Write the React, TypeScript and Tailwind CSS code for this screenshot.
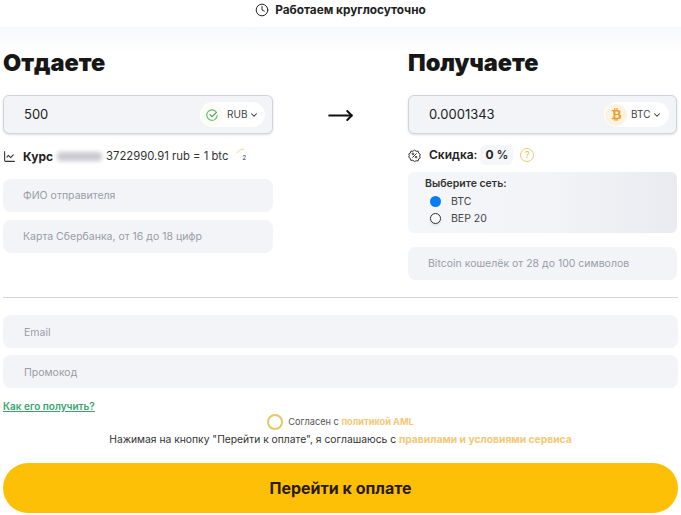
import { ChevronDown, Clock, LineChart, MoveRight } from "lucide-react";
import { FaBtc } from "react-icons/fa";

const sans = "font-['Inter','Liberation_Sans',sans-serif]";
const inputBox = "flex h-[33px] items-center rounded-lg bg-[#f3f4f8] pl-5 pt-[1px] text-[10.5px] text-[#9a9da6]";

function Coin({ code, children, tint }: { code: string; children: React.ReactNode; tint: string }) {
  return (
    <div className="flex h-[25px] w-[65px] items-center rounded-full bg-white pl-px">
      <span className={`flex h-[22px] w-[22px] items-center justify-center rounded-full ${tint}`}>{children}</span>
      <span className="ml-[4px] text-[10px] text-[#444]">{code}</span>
      <ChevronDown size={10} strokeWidth={2.5} className="ml-[2px] text-[#333]" />
    </div>
  );
}

function AmountBox({ value, children }: { value: string; children: React.ReactNode }) {
  return (
    <div className="flex h-[39px] items-center justify-between rounded-md border border-[#cfd3dd] bg-[#f3f4f8] pl-5 pr-[7px] shadow-sm">
      <span className="pt-px text-[13px] text-[#222]">{value}</span>
      {children}
    </div>
  );
}

export default function App() {
  return (
    <div className={`h-[515px] w-[681px] overflow-hidden bg-white ${sans}`}>
      <header className="flex h-[27px] items-start justify-center gap-[6px] pt-[2px] text-[11.8px] font-bold text-[#222]">
        <Clock size={14} strokeWidth={1.7} className="mt-px" />
        <span>Работаем круглосуточно</span>
      </header>

      <div className="bg-[linear-gradient(#f7f8fa,#ffffff_26px)] px-[3px] pt-[21px]">
        <div className="flex justify-between pr-px">
          <div className="w-[270px]">
            <h2 className="text-[23.5px] font-black leading-[30px] text-[#171717]">Отдаете</h2>
            <div className="mt-[17px]">
              <AmountBox value="500">
                <Coin code="RUB" tint="bg-[#fbfdf4]">
                  <svg viewBox="0 0 24 24" width="14" height="14" fill="none" strokeWidth="2">
                    <path d="M20 8a9 9 0 1 0 1 4" stroke="#6fb58a" />
                    <path d="M8 11l4 4 8-8" stroke="#4aa35c" />
                  </svg>
                </Coin>
              </AmountBox>
            </div>
            <div className="mt-[14px] flex h-[17px] items-center text-[11.3px]">
              <LineChart size={13} strokeWidth={2} className="text-[#333]" />
              <b className="ml-[7px] text-[12px] font-bold text-[#222]">Курс</b>
              <span className="ml-[4px] h-[9px] w-[45px] rounded-sm bg-[#c9c9cf] blur-[2px]" />
              <span className="ml-[4px] text-[#333]">3722990.91 rub = 1 btc</span>
              <span className="relative ml-[8px] h-[14px] w-[12px]">
                <svg viewBox="0 0 12 14" width="12" height="14" fill="none" className="absolute left-0 top-[-3px]">
                  <path d="M1 6C2 4 4 2.500 8 2" stroke="#e9d98c" strokeWidth="1" />
                </svg>
                <span className="absolute left-[6px] top-[3px] text-[6px] text-[#333]">2</span>
              </span>
            </div>
            <div className="mt-[14px] flex flex-col gap-2">
              <div className={inputBox}>ФИО отправителя</div>
              <div className={inputBox}>Карта Сбербанка, от 16 до 18 цифр</div>
            </div>
          </div>

          <div className="pt-[54px]">
            <MoveRight size={27} strokeWidth={1.8} className="text-[#111]" />
          </div>

          <div className="w-[269px]">
            <h2 className="text-[23.5px] font-black leading-[30px] text-[#171717]">Получаете</h2>
            <div className="mt-[17px]">
              <AmountBox value="0.0001343">
                <Coin code="BTC" tint="bg-[#fdf3e3]">
                  <FaBtc size={13} className="text-[#ee9f33]" />
                </Coin>
              </AmountBox>
            </div>
            <div className="mt-[12px] flex h-[18px] items-center text-[12px]">
              <svg viewBox="0 0 24 24" width="13" height="13" fill="none" stroke="#222" strokeWidth="1.7">
                <path d="M12 2l3 2.200 3.700-.2 1 3.600 3 2.200-1.200 3.400 1.200 3.400-3 1.800-1 3.600-3.700-.2L12 23l-3-2.200-3.700.2-1-3.600-3-2.200 1.200-3.400L1.300 9.400l3-1.800 1-3.600L9 4.200z" />
                <path d="M8 16l8-8" />
                <circle cx="9" cy="9" r="1.500" />
                <circle cx="15" cy="15" r="1.500" />
              </svg>
              <span className="ml-[8px] font-semibold text-[#222]">Скидка:</span>
              <span className="ml-[3px] rounded-md bg-[#f5f6f9] px-[5px] py-px font-bold text-[#222]">
                0 <span className="font-medium">%</span>
              </span>
              <span className="ml-[7px] flex h-[14px] w-[14px] items-center justify-center rounded-full border border-[#eccb6b] text-[9px] text-[#e3b94a]">
                ?
              </span>
            </div>
            <div className="mt-[8px] h-[61px] rounded-md bg-gradient-to-r from-[#f5f6f9] via-[#f3f4f7] to-[#e9ebf0] pl-[17px] pt-[5px] text-[10.5px] text-[#333]">
              <div className="font-semibold leading-[14px]">Выберите сеть:</div>
              <div className="mt-[2px] flex h-[17px] items-center pl-[5px]">
                <span className="h-[11px] w-[11px] rounded-full bg-[#0a7cf2]" />
                <span className="ml-[10px] text-[#444]">BTC</span>
              </div>
              <div className="flex h-[17px] items-center pl-[5px]">
                <span className="h-[11px] w-[11px] rounded-full border border-[#333] bg-white shadow" />
                <span className="ml-[10px] text-[#444]">BEP 20</span>
              </div>
            </div>
            <div className={`${inputBox} mt-[14px]`}>Bitcoin кошелёк от 28 до 100 символов</div>
          </div>
        </div>

        <hr className="mt-[17px] border-t border-[#d5d6d9]" />

        <div className="mt-[17px] flex flex-col gap-[7px]">
          <div className={`${inputBox} pl-[21px] pt-[2px]`}>Email</div>
          <div className={`${inputBox} pl-[21px] pt-[2px]`}>Промокод</div>
        </div>

        <a className="mt-[12px] block text-[10px] font-semibold leading-[13px] text-[#3aa46e] underline">Как его получить?</a>

        <div className="mt-px flex items-center justify-center text-[9.2px] text-[#555]">
          <span className="h-[16px] w-[16px] rounded-full border-2 border-[#e7c66a]" />
          <span className="ml-[5px]">
            Согласен с <b className="font-bold text-[#f3c877]">политикой AML</b>
          </span>
        </div>

        <p className="mt-[2px] text-center text-[10.3px] leading-[15px] text-[#333]">
          Нажимая на кнопку "Перейти к оплате", я соглашаюсь с{" "}
          <b className="font-bold text-[#f3c877]">правилами и условиями сервиса</b>
        </p>

        <button className="mt-[16px] flex h-[50px] w-full items-center justify-center rounded-full bg-[#fec006] text-[16px] font-bold text-[#2a1a05]">
          Перейти к оплате
        </button>
      </div>
    </div>
  );
}
